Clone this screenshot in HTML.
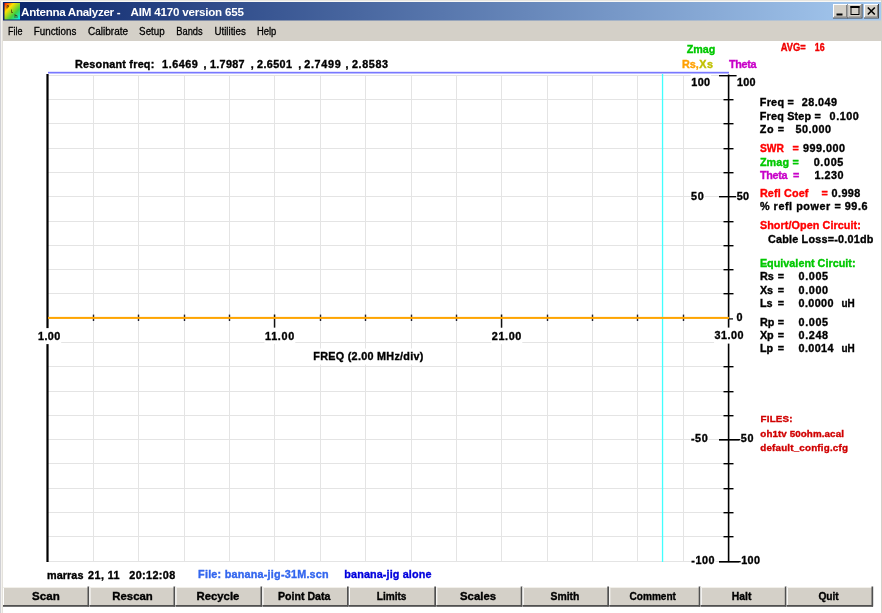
<!DOCTYPE html>
<html><head><meta charset="utf-8"><style>
html,body{margin:0;padding:0;background:#fff;overflow:hidden;}
svg{display:block;font-family:"Liberation Sans", sans-serif;filter:blur(0.35px);}
</style></head><body>
<svg width="882" height="613" viewBox="0 0 882 613">
<rect x="0.00" y="0.00" width="882.00" height="613.00" fill="#ffffff" />
<rect x="0.00" y="0.00" width="882.00" height="41.00" fill="#d4d0c8" />
<rect x="0.00" y="0.00" width="1.00" height="613.00" fill="#d0d0d4" />
<rect x="1.00" y="0.00" width="1.00" height="613.00" fill="#f4f2ee" />
<rect x="2.00" y="0.00" width="1.00" height="613.00" fill="#e4e2dc" />
<rect x="0.00" y="0.00" width="882.00" height="1.00" fill="#e8e6e0" />
<rect x="1.00" y="1.00" width="880.00" height="1.00" fill="#f8f8f6" />
<rect x="881.00" y="0.00" width="1.00" height="613.00" fill="#d4d0c8" />
<defs><linearGradient id="tg" x1="0" x2="1" y1="0" y2="0"><stop offset="0" stop-color="#0a246a"/><stop offset="1" stop-color="#a6caf0"/></linearGradient><linearGradient id="ic" x1="0" y1="0" x2="1" y2="1"><stop offset="0" stop-color="#ff1000"/><stop offset="0.3" stop-color="#ffe000"/><stop offset="0.65" stop-color="#40d040"/><stop offset="1" stop-color="#00f0ff"/></linearGradient></defs>
<rect x="3.00" y="2.00" width="878.00" height="18.50" fill="url(#tg)" />
<rect x="4.50" y="3.00" width="15.50" height="16.50" fill="url(#ic)" />
<path d="M7 5.5v3 M7 5.5h1.5v1.5h-1.5 M11.5 9.5v3h1.5 M15 14v4 M15 15.5h2v2.5" stroke="#402000" stroke-width="0.9" fill="none" opacity="0.7"/>
<rect x="833.00" y="4.00" width="15.00" height="14.50" fill="#404040" />
<rect x="833.00" y="4.00" width="14.00" height="13.50" fill="#ffffff" />
<rect x="834.00" y="5.00" width="13.00" height="12.50" fill="#808080" />
<rect x="834.00" y="5.00" width="12.00" height="11.50" fill="#d4d0c8" />
<rect x="847.50" y="4.00" width="15.00" height="14.50" fill="#404040" />
<rect x="847.50" y="4.00" width="14.00" height="13.50" fill="#ffffff" />
<rect x="848.50" y="5.00" width="13.00" height="12.50" fill="#808080" />
<rect x="848.50" y="5.00" width="12.00" height="11.50" fill="#d4d0c8" />
<rect x="864.00" y="4.00" width="15.00" height="14.50" fill="#404040" />
<rect x="864.00" y="4.00" width="14.00" height="13.50" fill="#ffffff" />
<rect x="865.00" y="5.00" width="13.00" height="12.50" fill="#808080" />
<rect x="865.00" y="5.00" width="12.00" height="11.50" fill="#d4d0c8" />
<rect x="836.50" y="13.50" width="6.00" height="2.00" fill="#000" />
<rect x="851" y="6.5" width="8" height="8" fill="none" stroke="#000" stroke-width="1"/>
<rect x="850.50" y="6.00" width="9.00" height="2.00" fill="#000" />
<path d="M867.8 7.5 L874.8 14.5 M874.8 7.5 L867.8 14.5" stroke="#000" stroke-width="1.6"/>
<line x1="48" y1="75.5" x2="728" y2="75.5" stroke="#e4e4e4" stroke-width="1"/>
<line x1="48" y1="99.5" x2="728" y2="99.5" stroke="#e4e4e4" stroke-width="1"/>
<line x1="48" y1="123.5" x2="728" y2="123.5" stroke="#e4e4e4" stroke-width="1"/>
<line x1="48" y1="148.5" x2="728" y2="148.5" stroke="#e4e4e4" stroke-width="1"/>
<line x1="48" y1="172.5" x2="728" y2="172.5" stroke="#e4e4e4" stroke-width="1"/>
<line x1="48" y1="196.5" x2="728" y2="196.5" stroke="#e4e4e4" stroke-width="1"/>
<line x1="48" y1="221.5" x2="728" y2="221.5" stroke="#e4e4e4" stroke-width="1"/>
<line x1="48" y1="245.5" x2="728" y2="245.5" stroke="#e4e4e4" stroke-width="1"/>
<line x1="48" y1="269.5" x2="728" y2="269.5" stroke="#e4e4e4" stroke-width="1"/>
<line x1="48" y1="293.5" x2="728" y2="293.5" stroke="#e4e4e4" stroke-width="1"/>
<line x1="48" y1="318.5" x2="728" y2="318.5" stroke="#e4e4e4" stroke-width="1"/>
<line x1="48" y1="342.5" x2="728" y2="342.5" stroke="#e4e4e4" stroke-width="1"/>
<line x1="48" y1="366.5" x2="728" y2="366.5" stroke="#e4e4e4" stroke-width="1"/>
<line x1="48" y1="391.5" x2="728" y2="391.5" stroke="#e4e4e4" stroke-width="1"/>
<line x1="48" y1="415.5" x2="728" y2="415.5" stroke="#e4e4e4" stroke-width="1"/>
<line x1="48" y1="439.5" x2="728" y2="439.5" stroke="#e4e4e4" stroke-width="1"/>
<line x1="48" y1="463.5" x2="728" y2="463.5" stroke="#e4e4e4" stroke-width="1"/>
<line x1="48" y1="488.5" x2="728" y2="488.5" stroke="#e4e4e4" stroke-width="1"/>
<line x1="48" y1="512.5" x2="728" y2="512.5" stroke="#e4e4e4" stroke-width="1"/>
<line x1="48" y1="536.5" x2="728" y2="536.5" stroke="#e4e4e4" stroke-width="1"/>
<line x1="48" y1="561.5" x2="728" y2="561.5" stroke="#e4e4e4" stroke-width="1"/>
<line x1="93.5" y1="75" x2="93.5" y2="562" stroke="#e4e4e4" stroke-width="1"/>
<line x1="138.5" y1="75" x2="138.5" y2="562" stroke="#e4e4e4" stroke-width="1"/>
<line x1="184.5" y1="75" x2="184.5" y2="562" stroke="#e4e4e4" stroke-width="1"/>
<line x1="229.5" y1="75" x2="229.5" y2="562" stroke="#e4e4e4" stroke-width="1"/>
<line x1="274.5" y1="75" x2="274.5" y2="562" stroke="#e4e4e4" stroke-width="1"/>
<line x1="320.5" y1="75" x2="320.5" y2="562" stroke="#e4e4e4" stroke-width="1"/>
<line x1="365.5" y1="75" x2="365.5" y2="562" stroke="#e4e4e4" stroke-width="1"/>
<line x1="411.5" y1="75" x2="411.5" y2="562" stroke="#e4e4e4" stroke-width="1"/>
<line x1="456.5" y1="75" x2="456.5" y2="562" stroke="#e4e4e4" stroke-width="1"/>
<line x1="501.5" y1="75" x2="501.5" y2="562" stroke="#e4e4e4" stroke-width="1"/>
<line x1="547.5" y1="75" x2="547.5" y2="562" stroke="#e4e4e4" stroke-width="1"/>
<line x1="592.5" y1="75" x2="592.5" y2="562" stroke="#e4e4e4" stroke-width="1"/>
<line x1="637.5" y1="75" x2="637.5" y2="562" stroke="#e4e4e4" stroke-width="1"/>
<line x1="683.5" y1="75" x2="683.5" y2="562" stroke="#e4e4e4" stroke-width="1"/>
<rect x="48.00" y="71.80" width="681.00" height="1.70" fill="#7878ff" />
<rect x="661.90" y="74.00" width="1.30" height="488.00" fill="#40ffff" />
<rect x="92.80" y="314.60" width="1.40" height="6.40" fill="#202030" />
<rect x="137.80" y="314.60" width="1.40" height="6.40" fill="#202030" />
<rect x="183.80" y="314.60" width="1.40" height="6.40" fill="#202030" />
<rect x="228.80" y="314.60" width="1.40" height="6.40" fill="#202030" />
<rect x="273.80" y="314.50" width="1.50" height="13.20" fill="#101010" />
<rect x="319.80" y="314.60" width="1.40" height="6.40" fill="#202030" />
<rect x="364.80" y="314.60" width="1.40" height="6.40" fill="#202030" />
<rect x="410.80" y="314.60" width="1.40" height="6.40" fill="#202030" />
<rect x="455.80" y="314.60" width="1.40" height="6.40" fill="#202030" />
<rect x="500.80" y="314.50" width="1.50" height="13.20" fill="#101010" />
<rect x="546.80" y="314.60" width="1.40" height="6.40" fill="#202030" />
<rect x="591.80" y="314.60" width="1.40" height="6.40" fill="#202030" />
<rect x="636.80" y="314.60" width="1.40" height="6.40" fill="#202030" />
<rect x="682.80" y="314.60" width="1.40" height="6.40" fill="#202030" />
<rect x="46.40" y="74.00" width="2.20" height="488.00" fill="#000" />
<rect x="727.80" y="74.50" width="1.60" height="487.60" fill="#000" />
<rect x="719.00" y="75.00" width="20.00" height="1.40" fill="#000" />
<rect x="723.50" y="99.00" width="10.00" height="1.40" fill="#000" />
<rect x="723.50" y="123.00" width="10.00" height="1.40" fill="#000" />
<rect x="723.50" y="148.00" width="10.00" height="1.40" fill="#000" />
<rect x="723.50" y="172.00" width="10.00" height="1.40" fill="#000" />
<rect x="719.00" y="196.00" width="20.00" height="1.40" fill="#000" />
<rect x="723.50" y="221.00" width="10.00" height="1.40" fill="#000" />
<rect x="723.50" y="245.00" width="10.00" height="1.40" fill="#000" />
<rect x="723.50" y="269.00" width="10.00" height="1.40" fill="#000" />
<rect x="723.50" y="293.00" width="10.00" height="1.40" fill="#000" />
<rect x="728.00" y="318.20" width="5.00" height="1.40" fill="#202020" />
<rect x="723.50" y="366.00" width="10.00" height="1.40" fill="#000" />
<rect x="723.50" y="391.00" width="10.00" height="1.40" fill="#000" />
<rect x="723.50" y="415.00" width="10.00" height="1.40" fill="#000" />
<rect x="719.00" y="439.00" width="20.00" height="1.40" fill="#000" />
<rect x="723.50" y="463.00" width="10.00" height="1.40" fill="#000" />
<rect x="723.50" y="488.00" width="10.00" height="1.40" fill="#000" />
<rect x="723.50" y="512.00" width="10.00" height="1.40" fill="#000" />
<rect x="723.50" y="536.00" width="10.00" height="1.40" fill="#000" />
<rect x="719.00" y="561.00" width="20.00" height="1.40" fill="#000" />
<rect x="719.00" y="561.00" width="22.00" height="1.40" fill="#000" />
<rect x="48.00" y="316.90" width="681.00" height="2.00" fill="#ffa500" />
<rect x="719.00" y="439.00" width="22.00" height="1.40" fill="#000" />
<rect x="3.00" y="587.00" width="85.00" height="19.00" fill="#d4d0c8" />
<rect x="3.00" y="587.00" width="1.00" height="18.00" fill="#ffffff" />
<rect x="3.00" y="587.00" width="85.00" height="1.00" fill="#f2f0ea" />
<rect x="87.50" y="586.50" width="1.70" height="20.00" fill="#505050" />
<rect x="3.00" y="605.00" width="86.00" height="1.80" fill="#505050" />
<rect x="89.50" y="587.00" width="84.50" height="19.00" fill="#d4d0c8" />
<rect x="89.50" y="587.00" width="1.00" height="18.00" fill="#ffffff" />
<rect x="89.50" y="587.00" width="84.50" height="1.00" fill="#f2f0ea" />
<rect x="173.50" y="586.50" width="1.70" height="20.00" fill="#505050" />
<rect x="89.50" y="605.00" width="85.50" height="1.80" fill="#505050" />
<rect x="175.50" y="587.00" width="85.50" height="19.00" fill="#d4d0c8" />
<rect x="175.50" y="587.00" width="1.00" height="18.00" fill="#ffffff" />
<rect x="175.50" y="587.00" width="85.50" height="1.00" fill="#f2f0ea" />
<rect x="260.50" y="586.50" width="1.70" height="20.00" fill="#505050" />
<rect x="175.50" y="605.00" width="86.50" height="1.80" fill="#505050" />
<rect x="262.50" y="587.00" width="85.00" height="19.00" fill="#d4d0c8" />
<rect x="262.50" y="587.00" width="1.00" height="18.00" fill="#ffffff" />
<rect x="262.50" y="587.00" width="85.00" height="1.00" fill="#f2f0ea" />
<rect x="347.00" y="586.50" width="1.70" height="20.00" fill="#505050" />
<rect x="262.50" y="605.00" width="86.00" height="1.80" fill="#505050" />
<rect x="349.00" y="587.00" width="85.80" height="19.00" fill="#d4d0c8" />
<rect x="349.00" y="587.00" width="1.00" height="18.00" fill="#ffffff" />
<rect x="349.00" y="587.00" width="85.80" height="1.00" fill="#f2f0ea" />
<rect x="434.30" y="586.50" width="1.70" height="20.00" fill="#505050" />
<rect x="349.00" y="605.00" width="86.80" height="1.80" fill="#505050" />
<rect x="436.30" y="587.00" width="84.90" height="19.00" fill="#d4d0c8" />
<rect x="436.30" y="587.00" width="1.00" height="18.00" fill="#ffffff" />
<rect x="436.30" y="587.00" width="84.90" height="1.00" fill="#f2f0ea" />
<rect x="520.70" y="586.50" width="1.70" height="20.00" fill="#505050" />
<rect x="436.30" y="605.00" width="85.90" height="1.80" fill="#505050" />
<rect x="522.70" y="587.00" width="85.10" height="19.00" fill="#d4d0c8" />
<rect x="522.70" y="587.00" width="1.00" height="18.00" fill="#ffffff" />
<rect x="522.70" y="587.00" width="85.10" height="1.00" fill="#f2f0ea" />
<rect x="607.30" y="586.50" width="1.70" height="20.00" fill="#505050" />
<rect x="522.70" y="605.00" width="86.10" height="1.80" fill="#505050" />
<rect x="609.30" y="587.00" width="89.90" height="19.00" fill="#d4d0c8" />
<rect x="609.30" y="587.00" width="1.00" height="18.00" fill="#ffffff" />
<rect x="609.30" y="587.00" width="89.90" height="1.00" fill="#f2f0ea" />
<rect x="698.70" y="586.50" width="1.70" height="20.00" fill="#505050" />
<rect x="609.30" y="605.00" width="90.90" height="1.80" fill="#505050" />
<rect x="700.70" y="587.00" width="84.60" height="19.00" fill="#d4d0c8" />
<rect x="700.70" y="587.00" width="1.00" height="18.00" fill="#ffffff" />
<rect x="700.70" y="587.00" width="84.60" height="1.00" fill="#f2f0ea" />
<rect x="784.80" y="586.50" width="1.70" height="20.00" fill="#505050" />
<rect x="700.70" y="605.00" width="85.60" height="1.80" fill="#505050" />
<rect x="786.80" y="587.00" width="85.20" height="19.00" fill="#d4d0c8" />
<rect x="786.80" y="587.00" width="1.00" height="18.00" fill="#ffffff" />
<rect x="786.80" y="587.00" width="85.20" height="1.00" fill="#f2f0ea" />
<rect x="871.50" y="586.50" width="1.70" height="20.00" fill="#505050" />
<rect x="786.80" y="605.00" width="86.20" height="1.80" fill="#505050" />
<text x="21.10" y="15.60" font-size="11.6" fill="#fff" font-weight="bold" text-anchor="start" letter-spacing="-0.303" xml:space="preserve">Antenna Analyzer -</text>
<text x="130.60" y="15.60" font-size="11.6" fill="#fff" font-weight="bold" text-anchor="start" letter-spacing="-0.208" xml:space="preserve">AIM 4170 version 655</text>
<text transform="translate(7.90,34.90) scale(0.7980,1)" font-size="11.3" fill="#000" font-weight="normal" stroke="#000" stroke-width="0.3" text-anchor="start" xml:space="preserve">File</text>
<text transform="translate(33.80,34.90) scale(0.8697,1)" font-size="11.3" fill="#000" font-weight="normal" stroke="#000" stroke-width="0.3" text-anchor="start" xml:space="preserve">Functions</text>
<text transform="translate(88.10,34.90) scale(0.8837,1)" font-size="11.3" fill="#000" font-weight="normal" stroke="#000" stroke-width="0.3" text-anchor="start" xml:space="preserve">Calibrate</text>
<text transform="translate(139.10,34.90) scale(0.8687,1)" font-size="11.3" fill="#000" font-weight="normal" stroke="#000" stroke-width="0.3" text-anchor="start" xml:space="preserve">Setup</text>
<text transform="translate(176.30,34.90) scale(0.8245,1)" font-size="11.3" fill="#000" font-weight="normal" stroke="#000" stroke-width="0.3" text-anchor="start" xml:space="preserve">Bands</text>
<text transform="translate(214.40,34.90) scale(0.8651,1)" font-size="11.3" fill="#000" font-weight="normal" stroke="#000" stroke-width="0.3" text-anchor="start" xml:space="preserve">Utilities</text>
<text transform="translate(257.00,34.90) scale(0.8322,1)" font-size="11.3" fill="#000" font-weight="normal" stroke="#000" stroke-width="0.3" text-anchor="start" xml:space="preserve">Help</text>
<text x="75.10" y="68.30" font-size="10.8" fill="#000" font-weight="bold" stroke="#000" stroke-width="0.35" text-anchor="start" letter-spacing="0.232" xml:space="preserve">Resonant freq:</text>
<text x="162.10" y="68.30" font-size="10.8" fill="#000" font-weight="bold" stroke="#000" stroke-width="0.35" text-anchor="start" letter-spacing="0.536" xml:space="preserve">1.6469</text>
<text x="210.00" y="68.30" font-size="10.8" fill="#000" font-weight="bold" stroke="#000" stroke-width="0.35" text-anchor="start" letter-spacing="0.296" xml:space="preserve">1.7987</text>
<text x="257.00" y="68.30" font-size="10.8" fill="#000" font-weight="bold" stroke="#000" stroke-width="0.35" text-anchor="start" letter-spacing="0.396" xml:space="preserve">2.6501</text>
<text x="304.20" y="68.30" font-size="10.8" fill="#000" font-weight="bold" stroke="#000" stroke-width="0.35" text-anchor="start" letter-spacing="0.716" xml:space="preserve">2.7499</text>
<text x="352.00" y="68.30" font-size="10.8" fill="#000" font-weight="bold" stroke="#000" stroke-width="0.35" text-anchor="start" letter-spacing="0.596" xml:space="preserve">2.8583</text>
<text x="203.40" y="68.30" font-size="10.8" fill="#000" font-weight="bold" stroke="#000" stroke-width="0.35" text-anchor="start" xml:space="preserve">,</text>
<text x="250.80" y="68.30" font-size="10.8" fill="#000" font-weight="bold" stroke="#000" stroke-width="0.35" text-anchor="start" xml:space="preserve">,</text>
<text x="298.20" y="68.30" font-size="10.8" fill="#000" font-weight="bold" stroke="#000" stroke-width="0.35" text-anchor="start" xml:space="preserve">,</text>
<text x="345.40" y="68.30" font-size="10.8" fill="#000" font-weight="bold" stroke="#000" stroke-width="0.35" text-anchor="start" xml:space="preserve">,</text>
<text transform="translate(686.80,52.70) scale(0.9929,1)" font-size="10.8" fill="#00c800" font-weight="bold" stroke="#00c800" stroke-width="0.35" text-anchor="start" xml:space="preserve">Zmag</text>
<text x="681.90" y="68.20" font-size="10.8" fill="#ffa000" font-weight="bold" stroke="#ffa000" stroke-width="0.35" text-anchor="start" xml:space="preserve">Rs,</text>
<text x="699.30" y="68.20" font-size="10.8" fill="#c0c000" font-weight="bold" stroke="#c0c000" stroke-width="0.35" text-anchor="start" letter-spacing="0.399" xml:space="preserve">Xs</text>
<text x="729.00" y="67.80" font-size="10.8" fill="#c800c8" font-weight="bold" stroke="#c800c8" stroke-width="0.35" text-anchor="start" letter-spacing="-0.323" xml:space="preserve">Theta</text>
<text transform="translate(780.70,50.70) scale(0.9075,1)" font-size="10.3" fill="#f00000" font-weight="bold" stroke="#f00000" stroke-width="0.35" text-anchor="start" xml:space="preserve">AVG=</text>
<text transform="translate(814.80,50.70) scale(0.8528,1)" font-size="10.3" fill="#f00000" font-weight="bold" stroke="#f00000" stroke-width="0.35" text-anchor="start" xml:space="preserve">16</text>
<rect x="37.50" y="328.10" width="23.70" height="16.00" fill="#fff" />
<text x="38.00" y="339.70" font-size="10.8" fill="#000" font-weight="bold" stroke="#000" stroke-width="0.35" text-anchor="start" letter-spacing="0.397" xml:space="preserve">1.00</text>
<rect x="264.50" y="327.90" width="30.80" height="16.00" fill="#fff" />
<text x="265.00" y="339.50" font-size="10.8" fill="#000" font-weight="bold" stroke="#000" stroke-width="0.35" text-anchor="start" letter-spacing="0.721" xml:space="preserve">11.00</text>
<rect x="491.30" y="328.10" width="31.00" height="16.00" fill="#fff" />
<text x="491.80" y="339.70" font-size="10.8" fill="#000" font-weight="bold" stroke="#000" stroke-width="0.35" text-anchor="start" letter-spacing="0.622" xml:space="preserve">21.00</text>
<rect x="714.10" y="327.60" width="30.30" height="16.00" fill="#fff" />
<text x="714.60" y="339.20" font-size="10.8" fill="#000" font-weight="bold" stroke="#000" stroke-width="0.35" text-anchor="start" letter-spacing="0.447" xml:space="preserve">31.00</text>
<rect x="690.70" y="74.40" width="20.40" height="16.00" fill="#fff" />
<text x="691.20" y="86.00" font-size="10.8" fill="#000" font-weight="bold" stroke="#000" stroke-width="0.35" text-anchor="start" letter-spacing="0.445" xml:space="preserve">100</text>
<rect x="690.40" y="188.20" width="14.40" height="16.00" fill="#fff" />
<text x="690.90" y="199.80" font-size="10.8" fill="#000" font-weight="bold" stroke="#000" stroke-width="0.35" text-anchor="start" letter-spacing="0.895" xml:space="preserve">50</text>
<rect x="690.40" y="430.20" width="18.30" height="16.00" fill="#fff" />
<text x="690.90" y="441.80" font-size="10.8" fill="#000" font-weight="bold" stroke="#000" stroke-width="0.35" text-anchor="start" letter-spacing="0.600" xml:space="preserve">-50</text>
<rect x="690.80" y="552.60" width="24.80" height="16.00" fill="#fff" />
<text x="691.30" y="564.20" font-size="10.8" fill="#000" font-weight="bold" stroke="#000" stroke-width="0.35" text-anchor="start" letter-spacing="0.565" xml:space="preserve">-100</text>
<rect x="736.60" y="74.40" width="19.90" height="16.00" fill="#fff" />
<text x="737.10" y="86.00" font-size="10.8" fill="#000" font-weight="bold" stroke="#000" stroke-width="0.35" text-anchor="start" letter-spacing="0.195" xml:space="preserve">100</text>
<rect x="736.20" y="188.20" width="13.80" height="16.00" fill="#fff" />
<text x="736.70" y="199.80" font-size="10.8" fill="#000" font-weight="bold" stroke="#000" stroke-width="0.35" text-anchor="start" letter-spacing="0.295" xml:space="preserve">50</text>
<rect x="736.10" y="309.00" width="7.50" height="16.00" fill="#fff" />
<text x="736.60" y="320.60" font-size="10.8" fill="#000" font-weight="bold" stroke="#000" stroke-width="0.35" text-anchor="start" xml:space="preserve">0</text>
<rect x="740.30" y="430.20" width="14.20" height="16.00" fill="#fff" />
<text x="740.80" y="441.80" font-size="10.8" fill="#000" font-weight="bold" stroke="#000" stroke-width="0.35" text-anchor="start" letter-spacing="0.695" xml:space="preserve">50</text>
<rect x="740.70" y="552.60" width="20.30" height="16.00" fill="#fff" />
<text x="741.20" y="564.20" font-size="10.8" fill="#000" font-weight="bold" stroke="#000" stroke-width="0.35" text-anchor="start" letter-spacing="0.395" xml:space="preserve">100</text>
<rect x="312.80" y="348.50" width="112.00" height="16.00" fill="#fff" />
<text x="313.30" y="360.10" font-size="10.8" fill="#000" font-weight="bold" stroke="#000" stroke-width="0.35" text-anchor="start" letter-spacing="0.284" xml:space="preserve">FREQ (2.00 MHz/div)</text>
<text x="759.80" y="106.30" font-size="10.8" fill="#000" font-weight="bold" stroke="#000" stroke-width="0.35" text-anchor="start" letter-spacing="0.261" xml:space="preserve">Freq =</text>
<text x="801.70" y="106.30" font-size="10.8" fill="#000" font-weight="bold" stroke="#000" stroke-width="0.35" text-anchor="start" letter-spacing="0.476" xml:space="preserve">28.049</text>
<text x="759.80" y="119.90" font-size="10.8" fill="#000" font-weight="bold" stroke="#000" stroke-width="0.35" text-anchor="start" letter-spacing="0.191" xml:space="preserve">Freq Step =</text>
<text x="829.60" y="119.90" font-size="10.8" fill="#000" font-weight="bold" stroke="#000" stroke-width="0.35" text-anchor="start" letter-spacing="0.547" xml:space="preserve">0.100</text>
<text x="759.80" y="132.80" font-size="10.8" fill="#000" font-weight="bold" stroke="#000" stroke-width="0.35" text-anchor="start" letter-spacing="0.570" xml:space="preserve">Zo =</text>
<text x="795.60" y="132.80" font-size="10.8" fill="#000" font-weight="bold" stroke="#000" stroke-width="0.35" text-anchor="start" letter-spacing="0.476" xml:space="preserve">50.000</text>
<text transform="translate(759.90,152.20) scale(0.9531,1)" font-size="10.8" fill="#ff0000" font-weight="bold" stroke="#ff0000" stroke-width="0.35" text-anchor="start" xml:space="preserve">SWR</text>
<text x="792.50" y="152.20" font-size="10.8" fill="#ff0000" font-weight="bold" stroke="#ff0000" stroke-width="0.35" text-anchor="start" xml:space="preserve">=</text>
<text x="802.90" y="152.20" font-size="10.8" fill="#000" font-weight="bold" stroke="#000" stroke-width="0.35" text-anchor="start" letter-spacing="0.513" xml:space="preserve">999.000</text>
<text x="759.90" y="165.50" font-size="10.8" fill="#00c800" font-weight="bold" stroke="#00c800" stroke-width="0.35" text-anchor="start" letter-spacing="0.133" xml:space="preserve">Zmag</text>
<text x="792.50" y="165.50" font-size="10.8" fill="#00c800" font-weight="bold" stroke="#00c800" stroke-width="0.35" text-anchor="start" xml:space="preserve">=</text>
<text x="813.70" y="165.50" font-size="10.8" fill="#000" font-weight="bold" stroke="#000" stroke-width="0.35" text-anchor="start" letter-spacing="0.647" xml:space="preserve">0.005</text>
<text x="759.90" y="178.60" font-size="10.8" fill="#c800c8" font-weight="bold" stroke="#c800c8" stroke-width="0.35" text-anchor="start" letter-spacing="-0.273" xml:space="preserve">Theta</text>
<text x="793.00" y="178.60" font-size="10.8" fill="#c800c8" font-weight="bold" stroke="#c800c8" stroke-width="0.35" text-anchor="start" xml:space="preserve">=</text>
<text x="814.60" y="178.60" font-size="10.8" fill="#000" font-weight="bold" stroke="#000" stroke-width="0.35" text-anchor="start" letter-spacing="0.497" xml:space="preserve">1.230</text>
<text x="759.90" y="197.00" font-size="10.8" fill="#ff0000" font-weight="bold" stroke="#ff0000" stroke-width="0.35" text-anchor="start" letter-spacing="0.138" xml:space="preserve">Refl Coef</text>
<text x="821.40" y="197.00" font-size="10.8" fill="#ff0000" font-weight="bold" stroke="#ff0000" stroke-width="0.35" text-anchor="start" xml:space="preserve">=</text>
<text x="831.60" y="197.00" font-size="10.8" fill="#000" font-weight="bold" stroke="#000" stroke-width="0.35" text-anchor="start" letter-spacing="0.422" xml:space="preserve">0.998</text>
<text x="759.90" y="210.30" font-size="10.8" fill="#000" font-weight="bold" stroke="#000" stroke-width="0.35" text-anchor="start" letter-spacing="0.561" xml:space="preserve">% refl power = 99.6</text>
<text x="759.90" y="229.10" font-size="10.8" fill="#ff0000" font-weight="bold" stroke="#ff0000" stroke-width="0.35" text-anchor="start" letter-spacing="0.079" xml:space="preserve">Short/Open Circuit:</text>
<text x="767.90" y="242.60" font-size="10.8" fill="#000" font-weight="bold" stroke="#000" stroke-width="0.35" text-anchor="start" letter-spacing="0.217" xml:space="preserve">Cable Loss=-0.01db</text>
<text x="759.90" y="266.70" font-size="10.8" fill="#00c800" font-weight="bold" stroke="#00c800" stroke-width="0.35" text-anchor="start" letter-spacing="0.012" xml:space="preserve">Equivalent Circuit:</text>
<text x="759.90" y="280.20" font-size="10.8" fill="#000" font-weight="bold" stroke="#000" stroke-width="0.35" text-anchor="start" xml:space="preserve">Rs</text>
<text x="777.80" y="280.20" font-size="10.8" fill="#000" font-weight="bold" stroke="#000" stroke-width="0.35" text-anchor="start" xml:space="preserve">=</text>
<text x="798.60" y="280.20" font-size="10.8" fill="#000" font-weight="bold" stroke="#000" stroke-width="0.35" text-anchor="start" letter-spacing="0.597" xml:space="preserve">0.005</text>
<text x="759.90" y="293.60" font-size="10.8" fill="#000" font-weight="bold" stroke="#000" stroke-width="0.35" text-anchor="start" xml:space="preserve">Xs</text>
<text x="777.80" y="293.60" font-size="10.8" fill="#000" font-weight="bold" stroke="#000" stroke-width="0.35" text-anchor="start" xml:space="preserve">=</text>
<text x="798.60" y="293.60" font-size="10.8" fill="#000" font-weight="bold" stroke="#000" stroke-width="0.35" text-anchor="start" letter-spacing="0.597" xml:space="preserve">0.000</text>
<text x="759.90" y="306.70" font-size="10.8" fill="#000" font-weight="bold" stroke="#000" stroke-width="0.35" text-anchor="start" xml:space="preserve">Ls</text>
<text x="777.80" y="306.70" font-size="10.8" fill="#000" font-weight="bold" stroke="#000" stroke-width="0.35" text-anchor="start" xml:space="preserve">=</text>
<text x="798.60" y="306.70" font-size="10.8" fill="#000" font-weight="bold" stroke="#000" stroke-width="0.35" text-anchor="start" letter-spacing="0.356" xml:space="preserve">0.0000</text>
<text transform="translate(841.50,306.70) scale(0.9250,1)" font-size="10.8" fill="#000" font-weight="bold" stroke="#000" stroke-width="0.35" text-anchor="start" xml:space="preserve">uH</text>
<text x="759.90" y="325.50" font-size="10.8" fill="#000" font-weight="bold" stroke="#000" stroke-width="0.35" text-anchor="start" xml:space="preserve">Rp</text>
<text x="777.80" y="325.50" font-size="10.8" fill="#000" font-weight="bold" stroke="#000" stroke-width="0.35" text-anchor="start" xml:space="preserve">=</text>
<text x="798.60" y="325.50" font-size="10.8" fill="#000" font-weight="bold" stroke="#000" stroke-width="0.35" text-anchor="start" letter-spacing="0.597" xml:space="preserve">0.005</text>
<text x="759.90" y="339.00" font-size="10.8" fill="#000" font-weight="bold" stroke="#000" stroke-width="0.35" text-anchor="start" xml:space="preserve">Xp</text>
<text x="777.80" y="339.00" font-size="10.8" fill="#000" font-weight="bold" stroke="#000" stroke-width="0.35" text-anchor="start" xml:space="preserve">=</text>
<text x="798.60" y="339.00" font-size="10.8" fill="#000" font-weight="bold" stroke="#000" stroke-width="0.35" text-anchor="start" letter-spacing="0.597" xml:space="preserve">0.248</text>
<text x="759.90" y="352.10" font-size="10.8" fill="#000" font-weight="bold" stroke="#000" stroke-width="0.35" text-anchor="start" xml:space="preserve">Lp</text>
<text x="777.80" y="352.10" font-size="10.8" fill="#000" font-weight="bold" stroke="#000" stroke-width="0.35" text-anchor="start" xml:space="preserve">=</text>
<text x="798.60" y="352.10" font-size="10.8" fill="#000" font-weight="bold" stroke="#000" stroke-width="0.35" text-anchor="start" letter-spacing="0.356" xml:space="preserve">0.0014</text>
<text transform="translate(841.50,352.10) scale(0.9250,1)" font-size="10.8" fill="#000" font-weight="bold" stroke="#000" stroke-width="0.35" text-anchor="start" xml:space="preserve">uH</text>
<text x="760.60" y="422.20" font-size="9.8" fill="#d00000" font-weight="bold" stroke="#d00000" stroke-width="0.35" text-anchor="start" letter-spacing="0.168" xml:space="preserve">FILES:</text>
<text x="760.30" y="436.60" font-size="9.8" fill="#d00000" font-weight="bold" stroke="#d00000" stroke-width="0.35" text-anchor="start" letter-spacing="0.094" xml:space="preserve">oh1tv 50ohm.acal</text>
<text x="760.30" y="450.80" font-size="9.8" fill="#d00000" font-weight="bold" stroke="#d00000" stroke-width="0.35" text-anchor="start" letter-spacing="0.189" xml:space="preserve">default_config.cfg</text>
<text x="47.10" y="578.80" font-size="10.8" fill="#000" font-weight="bold" stroke="#000" stroke-width="0.35" text-anchor="start" letter-spacing="0.057" xml:space="preserve">marras</text>
<text x="88.00" y="578.80" font-size="10.8" fill="#000" font-weight="bold" stroke="#000" stroke-width="0.35" text-anchor="start" letter-spacing="0.436" xml:space="preserve">21, 11</text>
<text x="129.30" y="578.80" font-size="10.8" fill="#000" font-weight="bold" stroke="#000" stroke-width="0.35" text-anchor="start" letter-spacing="0.384" xml:space="preserve">20:12:08</text>
<text x="198.10" y="577.80" font-size="10.8" fill="#3366ee" font-weight="bold" stroke="#3366ee" stroke-width="0.35" text-anchor="start" letter-spacing="0.226" xml:space="preserve">File: banana-jig-31M.scn</text>
<text x="344.30" y="577.80" font-size="10.8" fill="#0000dd" font-weight="bold" stroke="#0000dd" stroke-width="0.35" text-anchor="start" letter-spacing="0.128" xml:space="preserve">banana-jig alone</text>
<text transform="translate(32.10,600.00) scale(1.0710,1)" font-size="10.8" fill="#000" font-weight="bold" stroke="#000" stroke-width="0.35" text-anchor="start" xml:space="preserve">Scan</text>
<text transform="translate(112.30,600.00) scale(1.0525,1)" font-size="10.8" fill="#000" font-weight="bold" stroke="#000" stroke-width="0.35" text-anchor="start" xml:space="preserve">Rescan</text>
<text transform="translate(196.50,600.00) scale(1.0511,1)" font-size="10.8" fill="#000" font-weight="bold" stroke="#000" stroke-width="0.35" text-anchor="start" xml:space="preserve">Recycle</text>
<text transform="translate(278.00,600.00) scale(0.9819,1)" font-size="10.8" fill="#000" font-weight="bold" stroke="#000" stroke-width="0.35" text-anchor="start" xml:space="preserve">Point Data</text>
<text transform="translate(376.70,600.00) scale(0.9374,1)" font-size="10.8" fill="#000" font-weight="bold" stroke="#000" stroke-width="0.35" text-anchor="start" xml:space="preserve">Limits</text>
<text transform="translate(460.00,600.00) scale(1.0551,1)" font-size="10.8" fill="#000" font-weight="bold" stroke="#000" stroke-width="0.35" text-anchor="start" xml:space="preserve">Scales</text>
<text transform="translate(550.50,600.00) scale(0.9661,1)" font-size="10.8" fill="#000" font-weight="bold" stroke="#000" stroke-width="0.35" text-anchor="start" xml:space="preserve">Smith</text>
<text transform="translate(629.50,600.00) scale(0.9344,1)" font-size="10.8" fill="#000" font-weight="bold" stroke="#000" stroke-width="0.35" text-anchor="start" xml:space="preserve">Comment</text>
<text transform="translate(731.80,600.00) scale(0.9615,1)" font-size="10.8" fill="#000" font-weight="bold" stroke="#000" stroke-width="0.35" text-anchor="start" xml:space="preserve">Halt</text>
<text transform="translate(818.40,600.00) scale(0.9412,1)" font-size="10.8" fill="#000" font-weight="bold" stroke="#000" stroke-width="0.35" text-anchor="start" xml:space="preserve">Quit</text>
</svg>
</body></html>
